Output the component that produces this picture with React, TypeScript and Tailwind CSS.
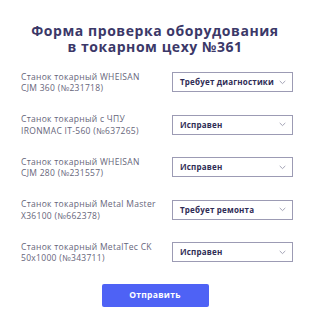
import React from "react";

const rows = [
  { name: ["Станок токарный WHEISAN", "CJM 360 (№231718)"], status: "Требует диагностики" },
  { name: ["Станок токарный с ЧПУ", "IRONMAC IT-560 (№637265)"], status: "Исправен" },
  { name: ["Станок токарный WHEISAN", "CJM 280 (№231557)"], status: "Исправен" },
  { name: ["Станок токарный Metal Master", "X36100 (№662378)"], status: "Требует ремонта" },
  { name: ["Станок токарный MetalTec CK", "50x1000 (№343711)"], status: "Исправен" },
];

const Chevron = () => (
  <svg width="7" height="5" viewBox="0 0 7 5" fill="none" className="shrink-0">
    <path d="M1 1.2 L3.5 3.6 L6 1.2" stroke="#9a9aae" strokeWidth="0.9" strokeLinecap="round" strokeLinejoin="round" />
  </svg>
);

const App = () => {
  return (
    <div className="w-[310px] h-[330px] bg-white font-['Open_Sans',sans-serif] pt-[23px]">
      <h1 className="text-center font-bold text-[14px] leading-[16px] text-[#3b3868] tracking-[0.55px]">
        <div>Форма проверка оборудования</div>
        <div>в токарном цеху №361</div>
      </h1>
      <div className="flex flex-col gap-[16.5px] mt-[14px] pl-[21px] pr-[17px]">
        {rows.map((r) => (
          <div key={r.status + r.name[1]} className="flex items-center justify-between h-[26px]">
            <div className="text-[8.5px] leading-[11.5px] text-[#66657a] tracking-[0.3px] whitespace-nowrap">
              {r.name[0]}
              <br />
              {r.name[1]}
            </div>
            <div className="w-[121px] h-[20px] shrink-0 border border-[#9c9bb4] flex items-center justify-between pl-[7px] pr-[6px]">
              <span className="text-[8px] font-bold text-[#2f2c55] tracking-[0.2px] whitespace-nowrap">
                {r.status}
              </span>
              <Chevron />
            </div>
          </div>
        ))}
      </div>
      <div className="flex justify-center mt-[19px]">
        <button className="w-[107px] h-[23px] bg-[#4e62f5] rounded-[2px] text-white text-[8.5px] font-bold tracking-[0.3px]">
          Отправить
        </button>
      </div>
    </div>
  );
};

export default App;
